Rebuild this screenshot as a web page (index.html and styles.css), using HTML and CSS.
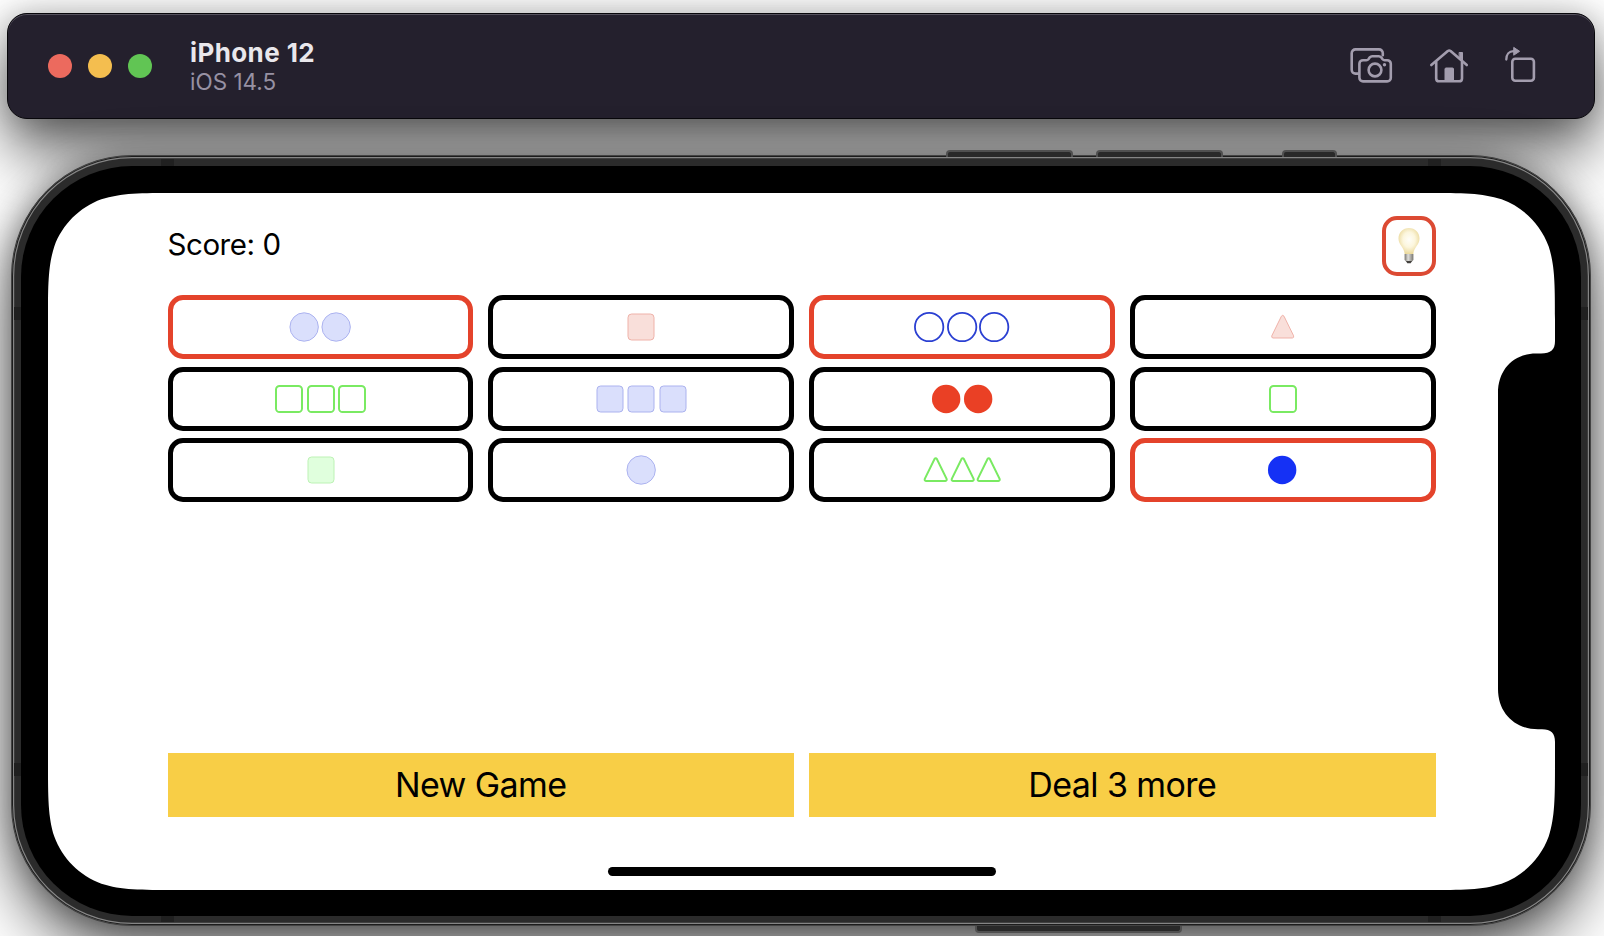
FILE: index.html
```html
<!DOCTYPE html>
<html lang="en">
<head>
<meta charset="utf-8">
<title>iPhone 12</title>
<link rel="stylesheet" href="styles.css">
</head>
<body>
<svg class="defs" width="0" height="0">
  <symbol id="circle" viewBox="0 0 32 32"><circle cx="16" cy="16" r="14.2"/></symbol>
  <symbol id="square" viewBox="0 0 31.5 32"><rect x="3" y="3" width="26" height="26" rx="3.6"/></symbol>
  <symbol id="triangle" viewBox="0 0 26.6 32"><path d="M12.400 5.2Q13.700 3.400 15 5.200L24.600 24.800Q25.200 26.800 23.400 27H4Q2.200 26.800 2.800 24.800Z"/></symbol>
</svg>

<header class="titlebar">
  <div class="lights"><i class="light red"></i><i class="light yellow"></i><i class="light green"></i></div>
  <div class="titles">
    <div class="device">iPhone 12</div>
    <div class="os">iOS 14.5</div>
  </div>
  <svg class="tools" width="190" height="40" viewBox="0 0 190 40" fill="none" stroke="#a39dae" stroke-width="2.6" stroke-linejoin="round" stroke-linecap="round">
    <path d="M8.500 27.600H5.500A3.800 3.800 0 0 1 1.700 23.800V7.200A3.800 3.800 0 0 1 5.500 3.400H29A3.800 3.800 0 0 1 32.800 7.200V9.200"/>
    <path d="M13 14.200H16.300Q17.600 14.200 18.400 13.200L19.800 11.300Q20.800 10.200 22.200 10.200H28.800Q30.200 10.200 31.200 11.300L32.600 13.200Q33.400 14.200 34.700 14.200H37.200A3.600 3.600 0 0 1 40.800 17.800V31.800A3.600 3.600 0 0 1 37.200 35.400H13A3.600 3.600 0 0 1 9.400 31.800V17.800A3.600 3.600 0 0 1 13 14.200Z"/>
    <circle cx="25" cy="24" r="6.400"/>
    <circle cx="34.500" cy="18.800" r="1.700" fill="#a39dae" stroke="none"/>
    <path d="M81.300 19L97.800 5Q99.200 4 100.600 5L116.800 19"/>
    <path d="M86.200 16V32.400Q86.200 35.300 89.200 35.300H109Q112 35.300 112 32.400V16"/>
    <path d="M95 35V23Q95 22 96 22H102.500Q103.500 22 103.500 23V35Z" fill="#a39dae" stroke-width="1"/>
    <path d="M109.500 6.500H112.500V14L109.500 11.500Z" fill="#a39dae" stroke-width="1"/>
    <rect x="162.300" y="12.800" width="21.600" height="22" rx="3"/>
    <path d="M156.300 13.500C156.300 8.500 159 5.200 163.500 5.200" stroke-width="2.300"/>
    <path d="M164 1.600L169.600 5.300L164 9Z" fill="#a39dae" stroke-width="1"/>
  </svg>
</header>

<main class="phone">
  <i class="key volume-up"></i><i class="key volume-down"></i><i class="key ringer"></i><i class="key power"></i>
  <i class="seam top left"></i><i class="seam top right"></i><i class="seam bottom left"></i><i class="seam bottom right"></i>
  <i class="seam side start upper"></i><i class="seam side start lower"></i><i class="seam side end upper"></i><i class="seam side end lower"></i>
  <section class="glass">
    <svg class="display" width="1507" height="697" viewBox="0 0 1507 697">
      <path fill="#fff" d="M129.200 0H1377.800c37.200 0 55.800 0 75.800 6.300c21.900 8 39.100 25.200 47.100 47.100c6.300 20 6.300 38.600 6.300 75.800V148C1507 157 1503 160.500 1493 160.500H1488C1466 160.500 1450 176 1450 200V496C1450 520 1467 536.300 1490 536.300H1494C1503 536.300 1507 540 1507 549V567.800c0 37.200 0 55.800-6.300 75.800c-8 21.900-25.200 39.100-47.100 47.100c-20 6.300-38.600 6.300-75.800 6.300H129.200c-37.200 0-55.800 0-75.800-6.300c-21.900-8-39.100-25.200-47.100-47.100C0 623.600 0 605 0 567.800V129.200c0-37.200 0-55.800 6.300-75.800c8-21.900 25.200-39.100 47.100-47.100C73.400 0 92 0 129.200 0Z"/>
    </svg>
    <div class="app">
      <div class="status">
        <div class="score">Score: 0</div>
        <button class="hint" aria-label="Hint">
          <svg width="24" height="38" viewBox="0 0 24 38">
            <defs>
              <radialGradient id="glow" cx="50%" cy="45%" r="58%"><stop offset="0" stop-color="#fffef8"/><stop offset=".5" stop-color="#fcf6dd"/><stop offset="1" stop-color="#e9d695"/></radialGradient>
              <linearGradient id="cap"><stop offset="0" stop-color="#77756f"/><stop offset=".4" stop-color="#e0dfdb"/><stop offset="1" stop-color="#77756f"/></linearGradient>
            </defs>
            <path fill="url(#glow)" d="M12 1C18 1 22.500 5.500 22.500 11.500C22.500 18 17 20 16.300 27H7.700C7 20 1.500 18 1.500 11.500C1.500 5.500 6 1 12 1Z"/>
            <path fill="url(#cap)" d="M7.600 27H16.400V33L14.500 35H9.500L7.600 33Z"/>
            <path fill="#44423f" d="M9 34H15L13.700 36.200H10.300Z"/>
          </svg>
        </button>
      </div>
      <div class="cards">
        <div class="card picked"><svg class="shape c blue shaded"><use href="#circle"/></svg><svg class="shape c blue shaded"><use href="#circle"/></svg></div>
        <div class="card"><svg class="shape s red shaded"><use href="#square"/></svg></div>
        <div class="card picked"><svg class="shape c blue open"><use href="#circle"/></svg><svg class="shape c blue open"><use href="#circle"/></svg><svg class="shape c blue open"><use href="#circle"/></svg></div>
        <div class="card"><svg class="shape t red shaded"><use href="#triangle"/></svg></div>
        <div class="card"><svg class="shape s green open"><use href="#square"/></svg><svg class="shape s green open"><use href="#square"/></svg><svg class="shape s green open"><use href="#square"/></svg></div>
        <div class="card"><svg class="shape s blue shaded"><use href="#square"/></svg><svg class="shape s blue shaded"><use href="#square"/></svg><svg class="shape s blue shaded"><use href="#square"/></svg></div>
        <div class="card"><svg class="shape c red solid"><use href="#circle"/></svg><svg class="shape c red solid"><use href="#circle"/></svg></div>
        <div class="card"><svg class="shape s green open"><use href="#square"/></svg></div>
        <div class="card"><svg class="shape s green shaded"><use href="#square"/></svg></div>
        <div class="card"><svg class="shape c blue shaded"><use href="#circle"/></svg></div>
        <div class="card"><svg class="shape t green open"><use href="#triangle"/></svg><svg class="shape t green open"><use href="#triangle"/></svg><svg class="shape t green open"><use href="#triangle"/></svg></div>
        <div class="card picked"><svg class="shape c blue solid"><use href="#circle"/></svg></div>
      </div>
      <div class="actions">
        <button class="action new">New Game</button>
        <button class="action deal">Deal 3 more</button>
      </div>
      <div class="home"></div>
    </div>
  </section>
</main>
</body>
</html>
```

FILE: styles.css
```css
* { box-sizing: border-box; }
body {
  margin: 0;
  width: 1604px;
  height: 936px;
  overflow: hidden;
  padding: 13px 9px 0 7px;
  display: flex;
  flex-direction: column;
  background: #fff;
  font-family: Inter, "Liberation Sans", sans-serif;
}
button { font: inherit; color: inherit; padding: 0; margin: 0; }
.defs { position: absolute; }

.titlebar {
  position: relative;
  flex: none;
  height: 106px;
  padding: 0 58px 0 41px;
  display: flex;
  align-items: center;
  background: #24202d;
  border: 1px solid #08070b;
  border-radius: 20px;
  box-shadow: inset 0 1px 0 #55515d, 0 32px 60px rgba(0, 0, 0, .62), 0 0 30px rgba(0, 0, 0, .22);
}
.lights { display: flex; gap: 16px; margin-left: -1px; }
.light { width: 24px; height: 24px; border-radius: 50%; }
.light.red { background: #ec6a5e; }
.light.yellow { background: #f4be4f; }
.light.green { background: #61c554; }
.titles { margin-left: 38px; flex: 1; }
.device { font-size: 26px; line-height: 31px; font-weight: 700; letter-spacing: .4px; color: #e9e7ec; }
.os { font-size: 22.500px; line-height: 28px; color: #9791a3; }
.tools { margin-right: -4px; }

.phone {
  position: relative;
  flex: none;
  width: 1580px;
  height: 771px;
  margin: 36px 0 0 4px;
  padding: 4px 4px 4px 3px;
  border-radius: 121px;
  background: #2b2b2b;
  border: 1px solid #444;
  box-shadow: inset 0 0 0 1px #1c1c1c, inset 0 0 0 2.200px #858585, 0 28px 64px rgba(0, 0, 0, .62), 0 0 30px rgba(0, 0, 0, .34);
}
.key { position: absolute; top: -6px; height: 7px; background: #292929; border: 2px solid #505050; border-bottom: 0; border-radius: 4px 4px 0 0; }
.volume-up { left: 934px; width: 127px; }
.volume-down { left: 1084px; width: 127px; }
.ringer { left: 1270px; width: 55px; }
.power { left: 963px; width: 207px; top: auto; bottom: -8px; border: 2px solid #505050; border-top: 0; border-radius: 0 0 4px 4px; }
.seam { position: absolute; background: #202020; width: 13px; height: 8px; }
.seam.top { top: 3px; }
.seam.bottom { bottom: 3px; }
.seam.left { left: 149px; }
.seam.right { left: 1416px; }
.seam.side { width: 8px; height: 13px; }
.seam.start { left: 2px; }
.seam.end { right: 2px; }
.seam.upper { top: 151px; }
.seam.lower { top: 607px; }

.glass {
  position: relative;
  width: 1560px;
  height: 750px;
  margin: 6px 0 0 6px;
  padding: 27px 27px 26px;
  border-radius: 111px;
  background: #000;
  display: grid;
}
.display, .app { grid-area: 1 / 1; }
.app {
  width: 1268px;
  margin-left: 119.500px;
  padding-top: 23px;
  display: flex;
  flex-direction: column;
  color: #000;
}
.status { display: flex; justify-content: space-between; align-items: center; height: 60px; }
.score { font-size: 29.500px; letter-spacing: -.45px; line-height: 36px; padding-bottom: 5px; }
.hint {
  width: 54px;
  height: 59.500px;
  border: 4px solid #dc4a33;
  border-radius: 15px;
  background: #fff;
  display: grid;
  place-items: center;
}
.cards {
  display: grid;
  grid-template-columns: repeat(4, 1fr);
  grid-auto-rows: 64px;
  gap: 7.600px 15px;
  margin-top: 19px;
}
.card {
  display: flex;
  justify-content: center;
  align-items: center;
  border: 5.400px solid #000;
  border-radius: 15px;
}
.card.picked { border-color: #e4432b; }
.shape { height: 32px; stroke-width: 2; overflow: visible; }
.c { width: 32.300px; }
.s { width: 31.500px; }
.t { width: 26.600px; }
.red { color: #ea4025; --tint: #f9dfda; --edge: #efb2a9; }
.green { color: #7aea62; --tint: #e0ffdd; --edge: #bdf2b5; }
.blue { color: #1531f5; --tint: #dadffc; --edge: #abb2ef; }
.open { fill: none; stroke: currentColor; }
.blue.open { stroke: #2b40d2; stroke-width: 1.800; }
.solid { fill: currentColor; stroke: none; }
.shaded { fill: var(--tint); stroke: var(--edge); stroke-width: 1; }

.actions { display: grid; grid-template-columns: 1fr 1fr; gap: 15px; margin-top: 250.500px; }
.action { height: 64px; border: 0; background: #f8ce46; font-size: 34px; letter-spacing: -.6px; }
.home { width: 388px; height: 9px; margin: 50px auto 0; border-radius: 5px; background: #000; }
```
